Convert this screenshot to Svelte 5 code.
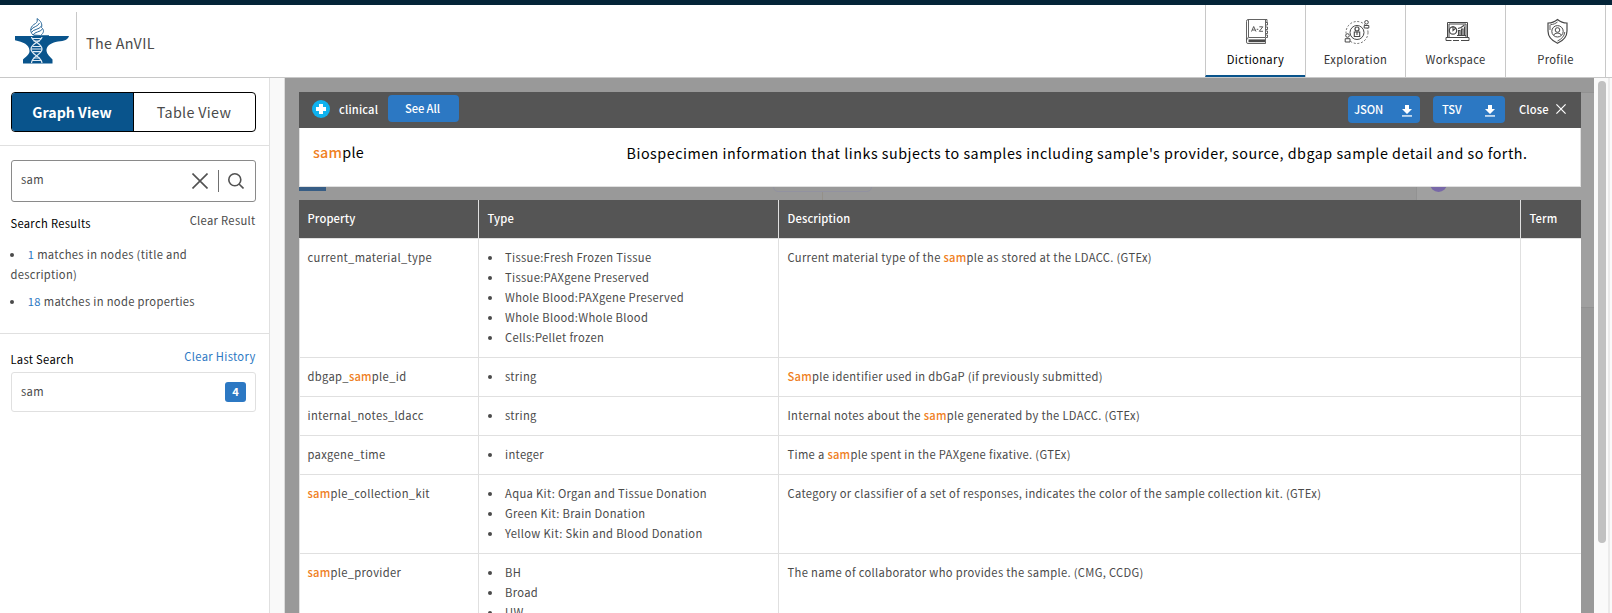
<script>
  const nav = ['Dictionary', 'Exploration', 'Workspace', 'Profile'];
  const query = 'sam';

  const rows = [
    {
      name: 'current_material_type',
      types: ['Tissue:Fresh Frozen Tissue', 'Tissue:PAXgene Preserved', 'Whole Blood:PAXgene Preserved', 'Whole Blood:Whole Blood', 'Cells:Pellet frozen'],
      text: 'Current material type of the sample as stored at the LDACC. (GTEx)', hit: true
    },
    { name: 'dbgap_sample_id', types: ['string'], text: 'Sample identifier used in dbGaP (if previously submitted)', hit: true },
    { name: 'internal_notes_ldacc', types: ['string'], text: 'Internal notes about the sample generated by the LDACC. (GTEx)', hit: true },
    { name: 'paxgene_time', types: ['integer'], text: 'Time a sample spent in the PAXgene fixative. (GTEx)', hit: true },
    {
      name: 'sample_collection_kit',
      types: ['Aqua Kit: Organ and Tissue Donation', 'Green Kit: Brain Donation', 'Yellow Kit: Skin and Blood Donation'],
      text: 'Category or classifier of a set of responses, indicates the color of the sample collection kit. (GTEx)', hit: false
    },
    { name: 'sample_provider', types: ['BH', 'Broad', 'UW'], text: 'The name of collaborator who provides the sample. (CMG, CCDG)', hit: false }
  ];

  // Splits a text round the first occurrence of the search term.
  function split(text, on = true) {
    const i = on ? text.toLowerCase().indexOf(query) : -1;
    return i < 0 ? [text, '', ''] : [text.slice(0, i), text.slice(i, i + query.length), text.slice(i + query.length)];
  }
</script>

{#snippet marked(text, on)}
  {@const p = split(text, on)}{p[0]}{#if p[1]}<span class="hit">{p[1]}</span>{/if}{p[2]}
{/snippet}

{#snippet download()}
  <svg class="dl" width="10" height="12" viewBox="0 0 10 12"><path d="M3 0h4v4h3L5 9 0 4h3z" /><path d="M0 10.3h10V11.6H0z" /></svg>
{/snippet}

<div class="page">
  <div class="strip"></div>
  <header>
    <svg class="logo" width="54" height="46" viewBox="0 0 54 46">
      <path fill="#09548c" d="M0 18H19V17.3H34V18H54C53 21.5 49.500 23 43 23.500C36 24.500 31 28 31.500 33C32 36.500 34.500 38 37.500 41.500V45.500H8V41.500C11.500 38 14.500 36.500 14.500 33C14.500 26.500 8 24 0 22.300Z" />
      <path fill="#fff" stroke="#2a699b" stroke-width="1" d="M18 17C14 13 15.500 8 20.500 5.500C22.500 4.300 22.500 2.500 22 0.600C26 3 27.500 6 26.500 9.500C29.500 12 29 15 25.500 17.500Z" />
      <g fill="none" stroke="#2a699b" stroke-width="1">
        <path d="M16 12C17.500 8.500 23 9 24.500 5M16.500 14.500C18 11 24 12 26.500 8M18 17C19.500 13.500 25 14.500 27.500 11" />
      </g>
      <g fill="none" stroke="#e1ecf5" stroke-width="1.200">
        <path d="M16.500 19C17 24 27 25 27 31C27 37 16.500 38 16.500 45M27 19C26.500 24 16 25 16 31C16 37 26.500 38 27 45" />
        <path d="M17 20.500H26.500M18.500 23H25M17.500 28.500H26M16 31H27M17.500 33.700H26M18.500 40H25M17 42.500H26.500" />
      </g>
    </svg>
    <div class="brand">The AnVIL</div>
    <nav>
      {#each nav as item, i}
        <div class="tab" class:active={i === 0}>
          <svg width="26" height="26" viewBox="0 0 26 26" fill="none" stroke="#484848" stroke-width="1">
            {#if i === 0}
              <path d="M23 4.500V1.500H4Q2.500 1.500 2.500 3.500V24Q2.500 25.500 4 25.500H21.500V19.500H5Q2.500 19.500 2.500 22.500M4.500 2V19M21.500 2V19M22 4.500h1.500v2.500H22M22 9h1.500v2.500H22M22 13h1.500v2.500H22M22 17h1.500v2.500H22" stroke-width=".85" />
              <path d="M4.500 22.800H21" stroke-width="2.800" />
              <path d="M7.500 13.500L9.700 8.500 12 13.500M8.300 12H11.200M12.700 11.300H14.300M15.300 8.800H18.800L15.300 13.300H19" stroke-width=".9" />
            {:else if i === 1}
              <circle cx="13" cy="14.500" r="11" stroke-dasharray="2 1.700" stroke-width=".8" />
              <circle cx="13" cy="14.500" r="7" />
              <circle cx="13" cy="11" r="2" stroke-width="1.200" /><path d="M10.300 18.500V14H15.700V18.500ZM13 14V17" stroke-width="1.100" />
              <g fill="#fff"><circle cx="22.500" cy="4.300" r="1.800" /><path d="M20.200 10V7.500H24.800V10Z" /><circle cx="3.500" cy="17.500" r="1.800" /><path d="M1.200 24V20.700H6V24Z" /></g>
            {:else if i === 2}
              <path d="M3.500 19.500V4.500H23.500V19.500M5 19V6H22V19" /><path d="M2 19.500H25V22.500H17M15 22.500H9M7.500 22.500H2V19.500" />
              <circle cx="9" cy="12.500" r="3.700" stroke-width="1.200" /><path d="M9 8V12.500L12 10M14.500 17V12.500H16V17M17.500 17V11H19V17M20.500 17V9H21M14 10.500L17 9.500 20.500 7M13 17.500H22" stroke-width="1.100" />
            {:else}
              <path d="M13.500 1.500C10 4.500 7.500 5 4 5V13C4 19 7.500 22.500 13.500 25.300C19.500 22.500 23 19 23 13V5C19.500 5 17 4.500 13.500 1.500Z" stroke-width="1.200" />
              <path d="M6 6.800V12M6.500 6.700C9.500 6.500 11.500 5.500 13.500 4M20.800 14C20.300 18.500 17.500 21 13.500 23" stroke-width=".9" />
              <circle cx="13.500" cy="13.300" r="5.700" /><circle cx="13.500" cy="12" r="2.300" /><path d="M9.700 17.300C10.300 14.500 16.700 14.500 17.300 17.300" />
            {/if}
          </svg>
          <span>{item}</span>
        </div>
      {/each}
    </nav>
  </header>

  <div class="body">
    <aside>
      <section class="views">
        <div class="toggle"><b>Graph View</b><span>Table View</span></div>
      </section>
      <section class="search">
        <div class="box input">
          <span>sam</span>
          <svg width="16" height="16" viewBox="0 0 16 16"><path d="M.5.500 15.500 15.500M15.500.500.500 15.500" /></svg>
          <i></i>
          <svg width="16" height="16" viewBox="0 0 16 16"><circle cx="6.800" cy="6.800" r="6" /><path d="M11 11 15.500 15.500" /></svg>
        </div>
        <div class="line"><span class="title">Search Results</span><span class="act">Clear Result</span></div>
        <p class="match first"><i class="dot"></i><em>1</em> matches in nodes (title and description)</p>
        <p class="match"><i class="dot"></i><em>18</em> matches in node properties</p>
      </section>
      <section class="history">
        <div class="line"><span class="title">Last Search</span><span class="act link">Clear History</span></div>
        <div class="box last"><span>sam</span><b class="badge">4</b></div>
      </section>
    </aside>
    <div class="gutter"></div>

    <main>
      <div class="legend"><div class="purple"></div></div>
      <div class="node"></div>
      <div class="edge"></div>
      <div class="overlay">
        <div class="bar">
          <svg width="18" height="18" viewBox="0 0 18 18"><circle cx="9" cy="9" r="9" fill="#0fb2ef" /><path fill="#fff" d="M7 4h4v3h3v4h-3v3H7v-3H4V7h3z" /></svg>
          <span class="category">clinical</span>
          <button class="all">See All</button>
          <span class="grow"></span>
          <button class="json">JSON {@render download()}</button>
          <button class="tsv">TSV {@render download()}</button>
          <span class="close">Close</span>
          <svg class="x" width="10" height="10" viewBox="0 0 10 10"><path d="M.4.400 9.600 9.600M9.600.400.400 9.600" /></svg>
        </div>
        <div class="summary">
          <div class="node-name">{@render marked('sample', true)}</div>
          <div class="node-text">Biospecimen information that links subjects to samples including sample's provider, source, dbgap sample detail and so forth.</div>
        </div>
        <div class="accent"></div>
        <div class="table">
          <div class="row head"><div>Property</div><div>Type</div><div>Description</div><div>Term</div></div>
          {#each rows as r}
            <div class="row">
              <div>{@render marked(r.name, true)}</div>
              <div class="types">{#each r.types as t}<span><i class="dot"></i>{t}</span>{/each}</div>
              <div>{@render marked(r.text, r.hit)}</div>
              <div></div>
            </div>
          {/each}
        </div>
      </div>
    </main>
    <div class="scroll"><div class="thumb"></div><div class="rail"></div></div>
  </div>
</div>

<style>
  :global(body) { background: #fff; overflow: hidden; }
  .page, .page * { box-sizing: border-box; }
  .page {
    display: flex; flex-direction: column; width: 1612px; height: 613px; overflow: hidden;
    font: 11.2px/20px "Noto Sans CJK SC", "Noto Sans", sans-serif; letter-spacing: .325px; color: #4a4a4a;
  }
  .strip { height: 5px; background: #042438; flex: none; }
  header { display: flex; height: 73px; flex: none; border-bottom: 1px solid #c8c8c8; padding-left: 15px; }
  .logo { margin-top: 13px; flex: none; }
  .brand { margin: 7px 0 0 7px; height: 58px; border-left: 1px solid #c8c8c8; padding-left: 9px; font-size: 14.32px; line-height: 62px; }
  nav { display: flex; margin-left: auto; margin-right: 6px; border-right: 1px solid #c8c8c8; }
  .tab { width: 100px; border-left: 1px solid #c8c8c8; display: flex; flex-direction: column; align-items: center; padding-top: 13px; color: #333; }
  .tab svg { flex: none; margin-left: 3px; }
  .tab span { line-height: 20px; margin-top: 5px; }
  .tab.active { color: #000; border-bottom: 2px solid #09548c; }
  .body { flex: 1; display: flex; min-height: 0; }

  aside { width: 270px; flex: none; border-right: 1px solid #e0e0e0; }
  .gutter { width: 15px; flex: none; background: #f9f9f9; border-right: 1px solid #dcdcdc; }
  section { padding: 14px 13px 0 11px; }
  .views { height: 68px; border-bottom: 1px solid #e0e0e0; }
  .toggle { display: flex; height: 40px; border: 1px solid #000; border-radius: 4px; overflow: hidden; font-size: 14.32px; line-height: 38px; text-align: center; }
  .toggle > * { flex: 1; }
  .toggle b { background: #09548c; color: #fff; border-right: 1px solid #000; font-size: 14.2px; letter-spacing: 0; padding-right: 1px; }
  .toggle span { padding-right: 1px; }
  .search { height: 188px; border-bottom: 1px solid #e0e0e0; }
  .box { display: flex; align-items: center; border: 1px solid #e0e0e0; border-radius: 3px; padding-left: 9px; }
  .box > span { flex: 1; }
  .input { height: 42px; border-color: #8a8a8a; padding-right: 11px; }
  .input > span { margin-top: -4px; }
  .input svg { fill: none; stroke: #525252; stroke-width: 1.6; }
  .input i { width: 1px; height: 22px; background: #707070; margin: 0 9px 0 10px; }
  .line { display: flex; justify-content: space-between; margin-left: -.6px; margin-right: .4px; }
  .title { color: #000; margin-top: 11px; }
  .act { margin-top: 8px; }
  .link { color: #2c78c3; }
  .match { margin: 0 0 7px -.6px; }
  .first { margin-top: 11px; padding-right: 40px; }
  .dot { display: inline-block; width: 4px; height: 4px; border-radius: 50%; background: #4a4a4a; vertical-align: 2px; }
  .match .dot { margin: 0 13.4px 0 0; }
  em { font-style: normal; color: #2c78c3; }
  .history { padding-top: 4px; }
  .last { height: 40px; margin-top: 3px; padding-right: 9px; }
  .last > span { margin-top: -2px; }
  .badge { width: 21px; height: 20px; line-height: 19px; border-radius: 3px; background: #2c78c3; color: #fff; text-align: center; letter-spacing: 0; }

  main { flex: 1; position: relative; background: #999; overflow: hidden; min-width: 0; }
  .legend { position: absolute; right: 0; top: 14px; width: 178px; height: 216px; background: #a0a0a0; border: 1px solid #929292; border-right: 0; }
  .purple { position: absolute; left: 13px; top: 82px; width: 17px; height: 17px; border-radius: 50%; background: #7868a8; }
  .node { position: absolute; left: 488px; top: 90px; width: 99px; height: 24px; border: 1px solid #9292a0; border-radius: 5px; }
  .edge { position: absolute; left: 537px; top: 114px; width: 1px; height: 10px; background: #949089; }
  .overlay { position: relative; padding: 14px 13px 0 14px; }
  .bar { display: flex; align-items: center; height: 36px; background: #555; color: #fff; padding: 0 15px 0 13px; }
  .bar > svg { flex: none; margin-top: -2px; }
  .category { margin-left: 9px; width: 49px; font-weight: 500; letter-spacing: .15px; margin-top: -2px; }
  .grow { flex: 1; }
  button { font: 500 11.2px/27px "Noto Sans CJK SC", "Noto Sans", sans-serif; border: 0; border-radius: 4px; background: #2c78c3; color: #fff; height: 27px; width: 71px; padding: 0; letter-spacing: -.1px; }
  .all { margin-top: -3px; padding-right: 2px; }
  .json, .tsv { width: 72px; display: flex; justify-content: space-between; align-items: center; padding: 0 8px 0 6px; margin-right: 13px; margin-top: -1px; }
  .tsv { padding-left: 9px; padding-right: 10px; margin-right: 14px; }
  .dl { fill: #fff; margin-top: 3px; }
  .close { font-weight: 500; letter-spacing: .1px; width: 37px; margin-top: -2px; }
  .x { fill: none; stroke: #fff; stroke-width: 1.2; }
  .summary { display: flex; justify-content: space-between; height: 59px; background: #fff; border: 1px solid #e0e0e0; border-top: 0; padding: 0 52.5px 0 13px; font-size: 14.32px; color: #000; line-height: 48px; white-space: nowrap; }
  .node-text { line-height: 50px; letter-spacing: .512px; }
  .accent { width: 27px; height: 4px; background: #375d85; margin-bottom: 9px; }
  .row { display: grid; grid-template-columns: 180px 300px 742px 60px; background: #fff; border-bottom: 1px solid #e0e0e0; }
  .row > div { padding: 8px 8px 10px 8.5px; border-right: 1px solid #e0e0e0; }
  .row > div:first-child { border-left: 1px solid #e0e0e0; padding-left: 7.5px; }
  .row > div:last-child { border-right: 0; }
  .hit { color: #ef8023; font-weight: 500; letter-spacing: .2px; }
  .row.head { background: #555; color: #fff; font-weight: 500; letter-spacing: .12px; }
  .row.head > div:first-child { border-left: 0; padding-left: 8.5px; }
  .types span { display: block; }
  .types .dot { margin: 0 13px 0 .5px; }
  .scroll { width: 18px; flex: none; background: #fafafa; display: flex; }
  .thumb { width: 8px; height: 462px; margin: 3px 2px 0 4px; border-radius: 4px; background: #c1c1c1; }
  .rail { width: 2px; background: #ebebeb; }
</style>
